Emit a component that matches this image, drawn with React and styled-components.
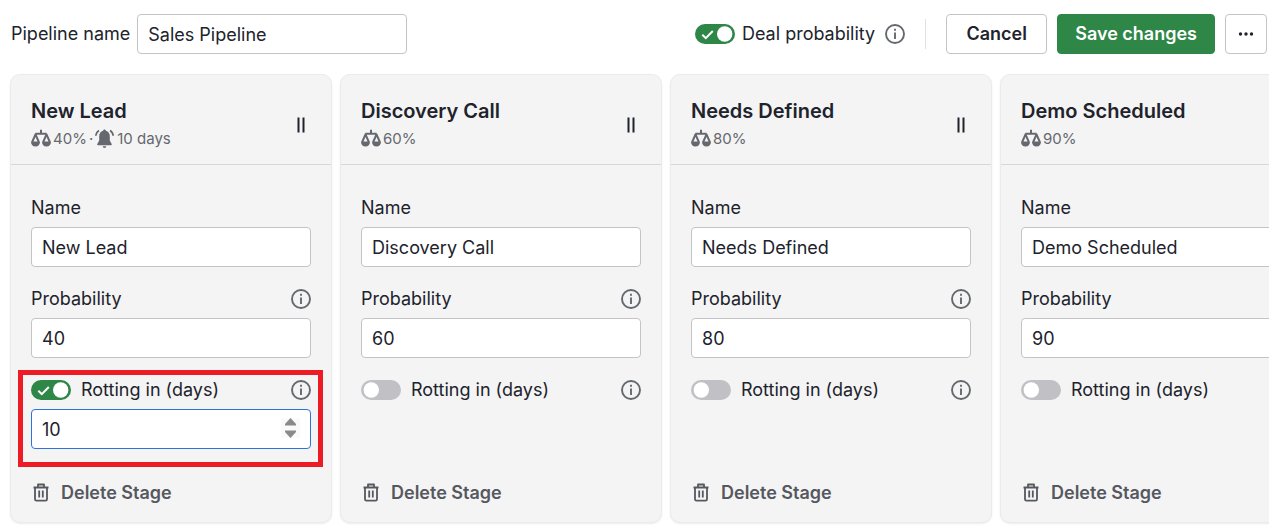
import React, { useId, useState } from "react";
import styled, { createGlobalStyle } from "styled-components";

const GlobalStyle = createGlobalStyle`
  *, *::before, *::after { box-sizing: border-box; }
  body {
    margin: 0;
    background: #fff;
    color: #21232c;
    font-family: Inter, "Liberation Sans", sans-serif;
    font-size: 18px;
    line-height: 20px;
  }
  input, button { font: inherit; color: inherit; margin: 0; }
`;

const Page = styled.main`
  overflow: hidden;
  padding: 14px 0 8px;
`;

const Toolbar = styled.header`
  display: flex;
  align-items: center;
  justify-content: space-between;
  gap: 20px;
  padding: 0 2px 0 11px;
`;

const ToolbarGroup = styled.div`
  display: flex;
  align-items: center;
  gap: 10px;
`;

const LabelledControl = styled.div`
  display: flex;
  align-items: center;
  gap: 7px;
`;

const Divider = styled.span`
  width: 1px;
  height: 30px;
  margin: 0 10px;
  background: #e1e1e3;
`;

const TextInput = styled.input`
  display: block;
  width: ${(p) => p.$width || "100%"};
  height: 40px;
  padding: 0 10px;
  border: 1px solid ${(p) => (p.$active ? "#2b74da" : "#c4c4c7")};
  border-radius: 4px;
  background: #fff;
  outline: none;
  appearance: textfield;
  &::-webkit-inner-spin-button, &::-webkit-outer-spin-button {
    appearance: none;
    margin: 0;
  }
`;

const Button = styled.button`
  min-width: ${(p) => (p.$icon ? "42px" : "101px")};
  height: 40px;
  padding: 0 ${(p) => (p.$icon ? "10px" : "17px")};
  border: 1px solid ${(p) => (p.$primary ? "#2e8647" : "#c4c4c7")};
  border-radius: 4px;
  background: ${(p) => (p.$primary ? "#2e8647" : "#fff")};
  color: ${(p) => (p.$primary ? "#fff" : "#21232c")};
  font-weight: 600;
  white-space: nowrap;
  cursor: pointer;
  svg { display: block; }
`;

const SwitchBox = styled.span`
  display: grid;
  width: 40px;
  height: 20px;
  > * { grid-area: 1 / 1; }
  svg { pointer-events: none; }
`;

const SwitchInput = styled.input`
  appearance: none;
  width: 40px;
  height: 20px;
  border-radius: 10px;
  background: #c1c1c5;
  cursor: pointer;
  &:checked { background: #2e8647; }
`;

const IconButton = styled.button`
  display: block;
  flex: none;
  padding: 0;
  border: 0;
  background: none;
  color: #65686f;
  cursor: pointer;
  svg { display: block; }
`;

const Board = styled.section`
  display: flex;
  gap: 8px;
  margin-top: 18px;
  padding: 2px 10px 4px;
  overflow-x: auto;
  scrollbar-width: none;
`;

const Card = styled.article`
  display: flex;
  flex: 0 0 322px;
  flex-direction: column;
  border: 1px solid #ebebec;
  border-radius: 10px;
  background: #f4f4f4;
  box-shadow: 0 1px 2px rgba(0, 0, 0, 0.08);
`;

const CardHeader = styled.header`
  display: flex;
  align-items: center;
  justify-content: space-between;
  padding: 24px 20px 14px;
  border-bottom: 1px solid #d8d8da;
`;

const Title = styled.h2`
  margin: 0 0 5px;
  font-size: 20px;
  font-weight: 600;
  line-height: 24px;
`;

const Meta = styled.div`
  display: flex;
  align-items: center;
  gap: 2px;
  color: #65686f;
  font-size: 15px;
  line-height: 22px;
  svg { display: block; }
`;

const CardBody = styled.div`
  display: flex;
  flex: 1;
  flex-direction: column;
  padding: 33px 20px 9px;
`;

const Field = styled.div`
  margin-bottom: 22px;
`;

const LabelRow = styled.div`
  display: flex;
  align-items: center;
  justify-content: space-between;
  margin-bottom: 9px;
`;

const SwitchLabel = styled.div`
  display: flex;
  align-items: center;
  gap: 10px;
`;

const RottingField = styled.div`
  position: relative;
  margin-bottom: 24px;
  &::after {
    content: "";
    display: ${(p) => (p.$highlighted ? "block" : "none")};
    position: absolute;
    inset: -10px -12px -18px -13px;
    border: 5px solid #ed1c24;
    pointer-events: none;
  }
`;

const NumberBox = styled.div`
  position: relative;
`;

const Stepper = styled.div`
  position: absolute;
  top: 9px;
  right: 11px;
  display: flex;
  flex-direction: column;
  width: 19px;
  height: 20px;
  background: #fafafa;
`;

const StepButton = styled.button`
  display: flex;
  flex: 1;
  align-items: ${(p) => p.$align};
  justify-content: center;
  padding: 0;
  border: 0;
  background: none;
  svg { display: block; }
`;

const DeleteButton = styled.button`
  display: flex;
  align-items: center;
  align-self: flex-start;
  gap: 10px;
  height: 40px;
  margin-top: auto;
  padding: 0;
  border: 0;
  background: none;
  color: #56585f;
  font-weight: 600;
  cursor: pointer;
`;

function InfoIcon() {
  return (
    <svg width="20" height="20" viewBox="0 0 20 20" fill="none" stroke="currentColor" strokeWidth="1.9" aria-hidden="true">
      <circle cx="10" cy="10" r="9" />
      <path d="M10 8.5v6.500M10 4.800v2" />
    </svg>
  );
}

function ScaleIcon() {
  return (
    <svg width="20" height="20" viewBox="0 0 20 20" fill="none" stroke="currentColor" strokeWidth="2" strokeLinejoin="round" aria-hidden="true">
      <path d="M10 .8v4M4.500 4.800h11M1.200 13l3.300-7.600L7.800 13M12.200 13l3.300-7.600L18.800 13" />
      <path d="M0 12.600h9c0 3.200-1.800 5-4.500 5S0 15.800 0 12.600zM11 12.600h9c0 3.200-1.800 5-4.500 5s-4.500-1.800-4.500-5z" fill="currentColor" stroke="none" />
    </svg>
  );
}

function BellIcon() {
  return (
    <svg width="20" height="20" viewBox="0 0 20 20" fill="currentColor" aria-hidden="true">
      <path d="M9.500 .5c.8 0 1.300.6 1.400 1.300 2.500.7 3.900 2.700 3.900 5.200v4.500l1.900 3.500c.3.700 0 1.200-.7 1.200H3c-.7 0-1-.5-.7-1.200l1.900-3.500V7c0-2.500 1.400-4.500 3.900-5.200C8.200 1.100 8.700.5 9.500.5zM7.700 17.300h3.600a1.800 1.700 0 0 1-3.600 0z" />
      <path d="M4 1.500C2 2.700 1 4.400.8 6.700M15 1.500c2 1.200 3 2.900 3.200 5.200" fill="none" stroke="currentColor" strokeWidth="1.700" />
    </svg>
  );
}

function TrashIcon() {
  return (
    <svg width="20" height="20" viewBox="0 0 20 20" fill="none" stroke="currentColor" strokeWidth="1.800" strokeLinejoin="round" aria-hidden="true">
      <path d="M2.500 4.500h15M7 4.200V1.500h6v2.700M4 4.700v11.500q0 1.500 1.500 1.500h9q1.500 0 1.500-1.500V4.700M8.200 7.500v7M11.800 7.500v7" />
    </svg>
  );
}

function Switch({ id, checked, onChange }) {
  return (
    <SwitchBox>
      <SwitchInput id={id} type="checkbox" role="switch" checked={checked} onChange={onChange} />
      <svg width="40" height="20" viewBox="0 0 40 20" fill="none" aria-hidden="true">
        {checked && <path d="M7.300 10.700l3.500 3.500 7-7.200" stroke="#fff" strokeWidth="2" />}
        <circle cx={checked ? 29.700 : 10.300} cy="10" r="7.700" fill="#fff" />
      </svg>
    </SwitchBox>
  );
}

function Info({ label }) {
  return (
    <IconButton type="button" aria-label={label}>
      <InfoIcon />
    </IconButton>
  );
}

function Stage({ name, probability, days: initialDays, highlighted }) {
  const id = useId();
  const [rotting, setRotting] = useState(initialDays != null);
  const [days, setDays] = useState(initialDays ?? 10);
  return (
    <Card>
      <CardHeader>
        <div>
          <Title>{name}</Title>
          <Meta>
            <ScaleIcon />
            <span>{probability}%</span>
            {rotting && (
              <>
                <span>·</span>
                <BellIcon />
                <span>{days} days</span>
              </>
            )}
          </Meta>
        </div>
        <IconButton type="button" aria-label={`Move ${name}`}>
          <svg width="20" height="20" viewBox="0 0 20 20" stroke="#21232c" strokeWidth="2" aria-hidden="true">
            <path d="M7.500 2.500v15M12.500 2.500v15" />
          </svg>
        </IconButton>
      </CardHeader>
      <CardBody>
        <Field>
          <LabelRow>
            <label htmlFor={`${id}-name`}>Name</label>
          </LabelRow>
          <TextInput id={`${id}-name`} defaultValue={name} />
        </Field>
        <Field>
          <LabelRow>
            <label htmlFor={`${id}-probability`}>Probability</label>
            <Info label="About probability" />
          </LabelRow>
          <TextInput id={`${id}-probability`} type="number" defaultValue={probability} />
        </Field>
        <RottingField $highlighted={highlighted}>
          <LabelRow>
            <SwitchLabel>
              <Switch id={`${id}-rotting`} checked={rotting} onChange={(e) => setRotting(e.target.checked)} />
              <label htmlFor={`${id}-rotting`}>Rotting in (days)</label>
            </SwitchLabel>
            <Info label="About rotting" />
          </LabelRow>
          {rotting && (
            <NumberBox>
              <TextInput
                $active
                type="number"
                aria-label="Days until rotting"
                value={days}
                onChange={(e) => setDays(Number(e.target.value))}
              />
              <Stepper>
                <StepButton type="button" $align="flex-start" aria-label="More days" onClick={() => setDays(days + 1)}>
                  <svg width="11" height="8" viewBox="0 0 11 8" fill="#8a8a8a" aria-hidden="true">
                    <path d="M5.500 0L11 6v1.500H0V6z" />
                  </svg>
                </StepButton>
                <StepButton type="button" $align="flex-end" aria-label="Fewer days" onClick={() => setDays(days - 1)}>
                  <svg width="11" height="8" viewBox="0 0 11 8" fill="#8a8a8a" aria-hidden="true">
                    <path d="M5.500 8L11 2V.5H0V2z" />
                  </svg>
                </StepButton>
              </Stepper>
            </NumberBox>
          )}
        </RottingField>
        <DeleteButton type="button">
          <TrashIcon />
          Delete Stage
        </DeleteButton>
      </CardBody>
    </Card>
  );
}

const STAGES = [
  { name: "New Lead", probability: 40, days: 10, highlighted: true },
  { name: "Discovery Call", probability: 60 },
  { name: "Needs Defined", probability: 80 },
  { name: "Demo Scheduled", probability: 90 },
];

export default function App() {
  const [dealProbability, setDealProbability] = useState(true);
  return (
    <Page>
      <GlobalStyle />
      <Toolbar>
        <LabelledControl>
          <label htmlFor="pipeline-name">Pipeline name</label>
          <TextInput id="pipeline-name" $width="270px" defaultValue="Sales Pipeline" />
        </LabelledControl>
        <ToolbarGroup>
          <LabelledControl>
            <Switch
              id="deal-probability"
              checked={dealProbability}
              onChange={(e) => setDealProbability(e.target.checked)}
            />
            <label htmlFor="deal-probability">Deal probability</label>
          </LabelledControl>
          <Info label="About deal probability" />
          <Divider />
          <Button type="button">Cancel</Button>
          <Button type="button" $primary>Save changes</Button>
          <Button type="button" $icon aria-label="More actions">
            <svg width="20" height="20" viewBox="0 0 20 20" fill="currentColor" aria-hidden="true">
              <circle cx="4.500" cy="10" r="1.700" />
              <circle cx="10" cy="10" r="1.700" />
              <circle cx="15.500" cy="10" r="1.700" />
            </svg>
          </Button>
        </ToolbarGroup>
      </Toolbar>
      <Board>
        {STAGES.map((stage) => (
          <Stage key={stage.name} {...stage} />
        ))}
      </Board>
    </Page>
  );
}
